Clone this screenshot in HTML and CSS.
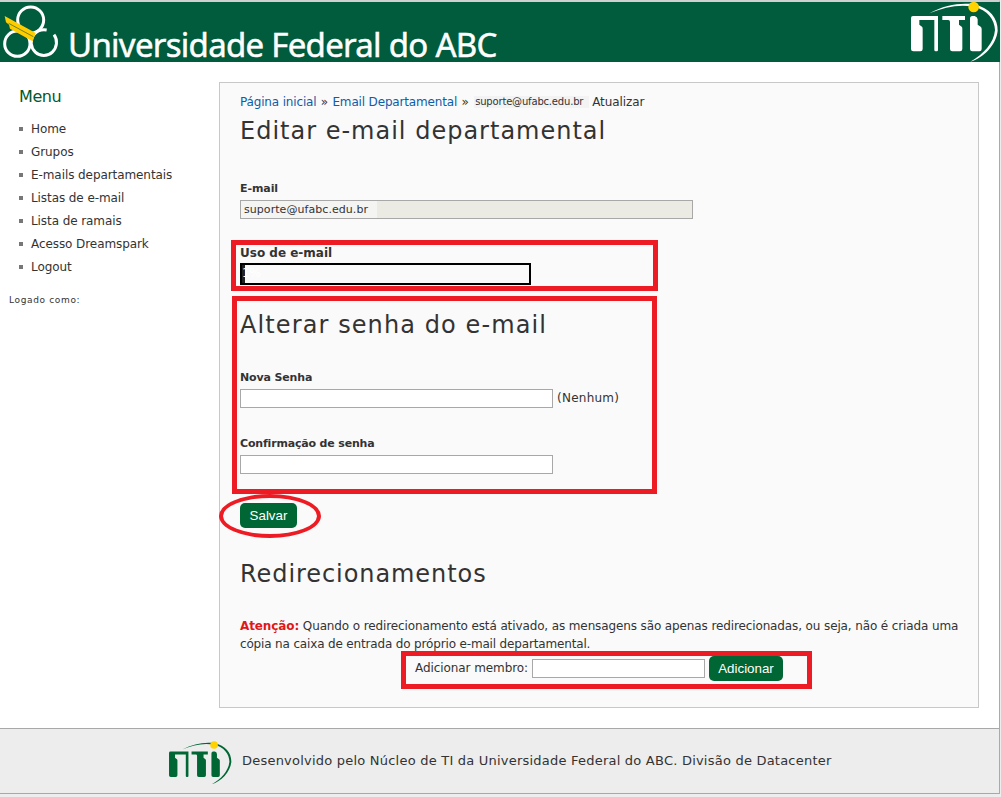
FILE: index.html
```html
<!DOCTYPE html>
<html lang="pt-BR">
<head>
<meta charset="utf-8">
<title>Editar e-mail departamental</title>
<link rel="stylesheet" href="styles.css">
</head>
<body>
<svg class="defs" aria-hidden="true">
  <symbol id="nti" viewBox="0 0 288 192">
    <path d="M27 48H102V150q0 4-4 4H95q-4 0-4-4V60H46V74l8 6q2 2 2 6V147q0 7-7 7H28q-7 0-7-7V54q0-6 6-6z"/>
    <path d="M115 48H183V60H165V74l8 6q2 2 2 6V147q0 7-7 7H145q-7 0-7-7V66q0-6-5-6H115z"/>
    <path d="M205 48H212q8 2 9 10V74l9 6q3 2 3 7V147q0 7-7 7H205q-7 0-7-7V56q0-8 7-8z"/>
    <path d="M76 40C122 16 165 8 210 13C258 24 282 56 281 92C277 134 238 174 199 185C238 163 270 129 273 90C272 58 251 30 209 20C165 12 122 21 76 40z"/>
    <circle cx="209" cy="21" r="16" fill="#ffd200"/>
  </symbol>
</svg>
<div class="page">
  <header class="banner">
    <svg class="ufabc" viewBox="0 0 192 180" fill="none" stroke="#fff" stroke-width="9">
      <circle cx="92" cy="54" r="39"/>
      <circle cx="52" cy="125" r="38"/>
      <path d="M140 84Q117 80 101 98A38 39 0 1 0 162 98"/>
      <path d="M14 42L107 93L98 118L30 80L27 68L18 61z" fill="#fc0" stroke="none"/>
      <path d="M26 64L100 104" stroke="#6d8418" stroke-width="3"/>
    </svg>
    <span class="uni">Universidade Federal do ABC</span>
    <svg class="nti-top"><use href="#nti"/></svg>
  </header>
  <div class="columns">
    <nav class="side">
      <h2>Menu</h2>
      <ul>
        <li>Home</li><li>Grupos</li><li>E-mails departamentais</li><li>Listas de e-mail</li><li>Lista de ramais</li><li>Acesso Dreamspark</li><li>Logout</li>
      </ul>
      <p class="logged">Logado como:</p>
    </nav>
    <main class="content">
      <div class="crumbs"><a>Página inicial</a><i>»</i><a class="dep">Email Departamental</a><i>»</i><span class="addr">suporte@ufabc.edu.br</span><span>Atualizar</span></div>
      <h1>Editar e-mail departamental</h1>
      <div class="label first">E-mail</div>
      <div class="field readonly"><span>suporte@ufabc.edu.br</span></div>
      <div class="label usage">Uso de e-mail</div>
      <div class="meter"><span>1%</span></div>
      <h1 class="pass">Alterar senha do e-mail</h1>
      <div class="label nova">Nova Senha</div>
      <div class="row"><div class="field"></div><span class="none">(Nenhum)</span></div>
      <div class="label conf">Confirmação de senha</div>
      <div class="field"></div>
      <button class="save">Salvar</button>
      <h1 class="redir">Redirecionamentos</h1>
      <p class="note"><b>Atenção:</b> <span>Quando o redirecionamento está ativado, as mensagens são apenas redirecionadas, ou seja, não é criada uma</span><br>cópia na caixa de entrada do próprio e-mail departamental.</p>
      <div class="add"><span>Adicionar membro:</span><div class="field"></div><button>Adicionar</button></div>
      <div class="mark m1"></div>
      <div class="mark m2"></div>
      <div class="mark m3"></div>
      <div class="mark m4"></div>
    </main>
  </div>
  <footer class="foot">
    <svg class="nti-foot"><use href="#nti"/></svg>
    <span>Desenvolvido pelo Núcleo de TI da Universidade Federal do ABC. Divisão de Datacenter</span>
  </footer>
</div>
</body>
</html>
```
FILE: styles.css
```css
*{box-sizing:border-box;margin:0;padding:0}
html{background:#ededed;overflow:hidden}
body{font:12px/18px "DejaVu Sans",Verdana,sans-serif;letter-spacing:-.08px;color:#333;white-space:nowrap}
.defs{position:absolute;width:0;height:0}
.page{width:1000px;height:794px;border-top:2px solid #d0d0d0;border-right:1px solid #aaa;background:#fff;display:flex;flex-direction:column}
.banner{width:1000px;height:60px;background:#005c3c;display:flex;flex:none}
.ufabc{width:64px;height:60px;flex:none}
.uni{font:33px/40px "Noto Sans","Open Sans",sans-serif;letter-spacing:-.72px;-webkit-text-stroke:.5px #fff;color:#fff;margin:23px 0 0 4px;width:837px;height:37px}
.nti-top{width:96px;height:64px;margin-top:-2px;flex:none;fill:#fff}
.columns{display:flex;height:666px;flex:none}
.side{width:219px;padding:25px 0 0 9px}
.side h2{font-size:16px;font-weight:400;line-height:20px;letter-spacing:-.4px;color:#00592f;margin-left:10px}
.side ul{list-style:none;margin-top:10px}
.side li{height:23px;line-height:23px;padding:1px 0 0 10px;display:flex;align-items:center;gap:8px}
.side li::before{content:"";width:4px;height:4px;margin-top:-1px;background:#777}
.logged{font-size:9px;letter-spacing:.65px;margin-top:14px;line-height:17px}
.content{position:relative;width:760px;height:626px;margin-top:20px;padding:10px 20px 0;border:1px solid #c8c8c8;background:#fafafa}
.crumbs{display:flex;height:18px}
.crumbs a{color:#0f5ca8;letter-spacing:-.16px}
.crumbs i{font-style:normal;width:16px;text-align:center}
.crumbs .addr{font:10px/12px "DejaVu Sans",sans-serif;letter-spacing:-.18px;background:#f3f3f3;width:115px;height:12px;padding-left:1px;margin:3px 3px 0 1px}
h1{font-size:24px;line-height:30px;font-weight:400;letter-spacing:1px;margin-top:5px}
.label{font-weight:700;font-size:11px;line-height:16px;margin-bottom:3px}
.first{margin-top:35px}
.field{width:313px;height:19px;border:1px solid #a8a8a8;background:#fff}
.readonly{width:453px;background:#ebebe3;font-size:11px;line-height:17px;letter-spacing:.06px}
.readonly span{display:block;width:136px;padding-left:3px;background:#f4f4f3}
.usage{font-size:12px;margin:26px 0 2px;letter-spacing:0}
.meter{width:291px;height:22px;border:2px solid #000;background:linear-gradient(90deg,#222 3px,#fafafa 3px);color:#fff;line-height:16px}
.pass{margin-top:25px;letter-spacing:1.1px}
.nova{margin-top:30px;letter-spacing:-.15px}
.row{display:flex;gap:4px;height:19px}
.none{letter-spacing:.25px}
.conf{margin-top:28px;letter-spacing:-.17px}
button{display:block;height:25px;border:0;border-radius:5px;background:#063;color:#fff;font:13.33px/25px "Liberation Sans",Arial,sans-serif;text-align:center;width:74px}
.save{width:57px;margin-top:29px}
.redir{margin-top:31px;letter-spacing:.93px}
.note{margin-top:28px;letter-spacing:-.16px}
.note span{letter-spacing:-.12px}
.note b{color:#e01818;letter-spacing:-.1px}
.add{display:flex;margin:3px 0 0 175px;height:25px}
.add span{width:117px;line-height:24px}
.add .field{width:173px;margin:3px 4px 0 0}
.mark{position:absolute;border:5px solid #ed1c24}
.m1{left:11px;top:157px;width:427px;height:51px}
.m2{left:12px;top:213px;width:425px;height:198px}
.m3{left:-1px;top:411px;width:102px;height:44px;border-width:4px;border-radius:50%}
.m4{left:181px;top:568px;width:411px;height:38px}
.foot{height:66px;flex:none;background:#ededed;border-top:1px solid #a8a8a8;border-bottom:1px solid #a8a8a8;display:flex;font-size:13px;line-height:20px;letter-spacing:.22px}
.foot span{margin:22px 0 0 9px}
.nti-foot{width:69px;height:46px;margin:11px 0 0 164px;fill:#063}
```
